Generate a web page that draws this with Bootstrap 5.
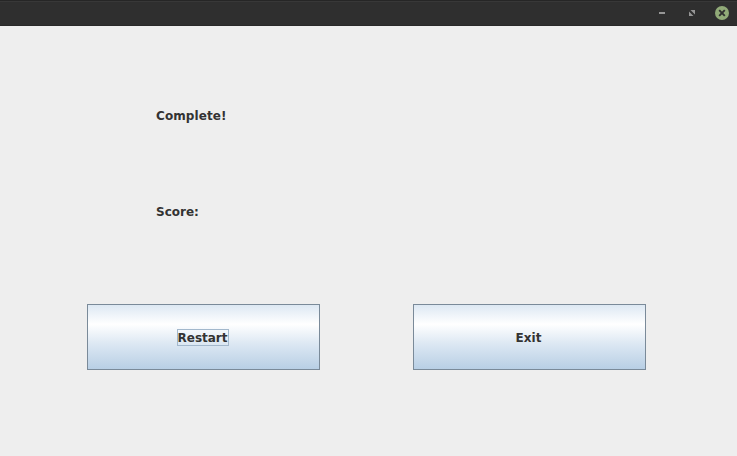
<!DOCTYPE html>
<html lang="en">
<head>
<meta charset="utf-8">
<meta name="viewport" content="width=device-width, initial-scale=1">
<title>Complete</title>
<link href="https://cdn.jsdelivr.net/npm/bootstrap@5.3.0/dist/css/bootstrap.min.css" rel="stylesheet">
<style>
  body { background: #eee; color: #333; font: bold 12px/14px "DejaVu Sans", sans-serif; }
  .titlebar { height: 26px; background: linear-gradient(#262626 0 1px, #383838 1px 2px, #2f2f2f 2px 25px, #292929 25px); padding-right: 8px; gap: 16px; }
  .win-btn { width: 14px; height: 14px; }
  .win-btn svg { display: block; }
  .message { margin: 83px 0 0 156px; letter-spacing: .1px; }
  .score { margin: 82px 0 0 156px; }
  .actions { margin: 85px 0 0 87px; gap: 93px; }
  .btn-metal {
    --bs-btn-border-radius: 0;
    --bs-btn-border-color: #7a8a99;
    --bs-btn-hover-border-color: #7a8a99;
    --bs-btn-color: #333;
    width: 233px; height: 66px;
    padding: 0 2px 0 0;
    font: inherit;
    background: linear-gradient(#dde8f3, #fff 30%, #dde8f3 60%, #b8cfe5);
  }
  .btn-caption { height: 17px; line-height: 18px; white-space: nowrap; }
  .focus-frame { border: 1px solid #a3b8cc; width: 52px; line-height: 16px; }
</style>
<script src="https://cdn.jsdelivr.net/npm/bootstrap@5.3.0/dist/js/bootstrap.bundle.min.js"></script>
</head>
<body class="vh-100 overflow-hidden">
<header class="titlebar d-flex align-items-center justify-content-end">
  <button class="win-btn border-0 p-0 bg-transparent" aria-label="Minimize">
    <svg width="14" height="14" viewBox="0 0 14 14"><path d="M4 6h6v2H4z" fill="#969696"/></svg>
  </button>
  <button class="win-btn border-0 p-0 bg-transparent" aria-label="Maximize">
    <svg width="14" height="14" viewBox="0 0 14 14"><path d="M5.500 4H10v4.500zM4 5.500V10h4.500z" fill="#969696"/></svg>
  </button>
  <button class="win-btn border-0 p-0 bg-transparent" aria-label="Close">
    <svg width="14" height="14" viewBox="0 0 14 14"><circle cx="7" cy="7" r="7" fill="#91aa78"/><path d="M4.200 4.200l5.600 5.600M9.800 4.200l-5.600 5.600" stroke="#2f2f2f" stroke-width="1.900"/></svg>
  </button>
</header>
<main>
  <div class="message">Complete!</div>
  <div class="score">Score:</div>
  <div class="actions d-flex">
    <button class="btn btn-metal d-flex align-items-center justify-content-center"><span class="btn-caption focus-frame">Restart</span></button>
    <button class="btn btn-metal d-flex align-items-center justify-content-center"><span class="btn-caption">Exit</span></button>
  </div>
</main>
</body>
</html>
